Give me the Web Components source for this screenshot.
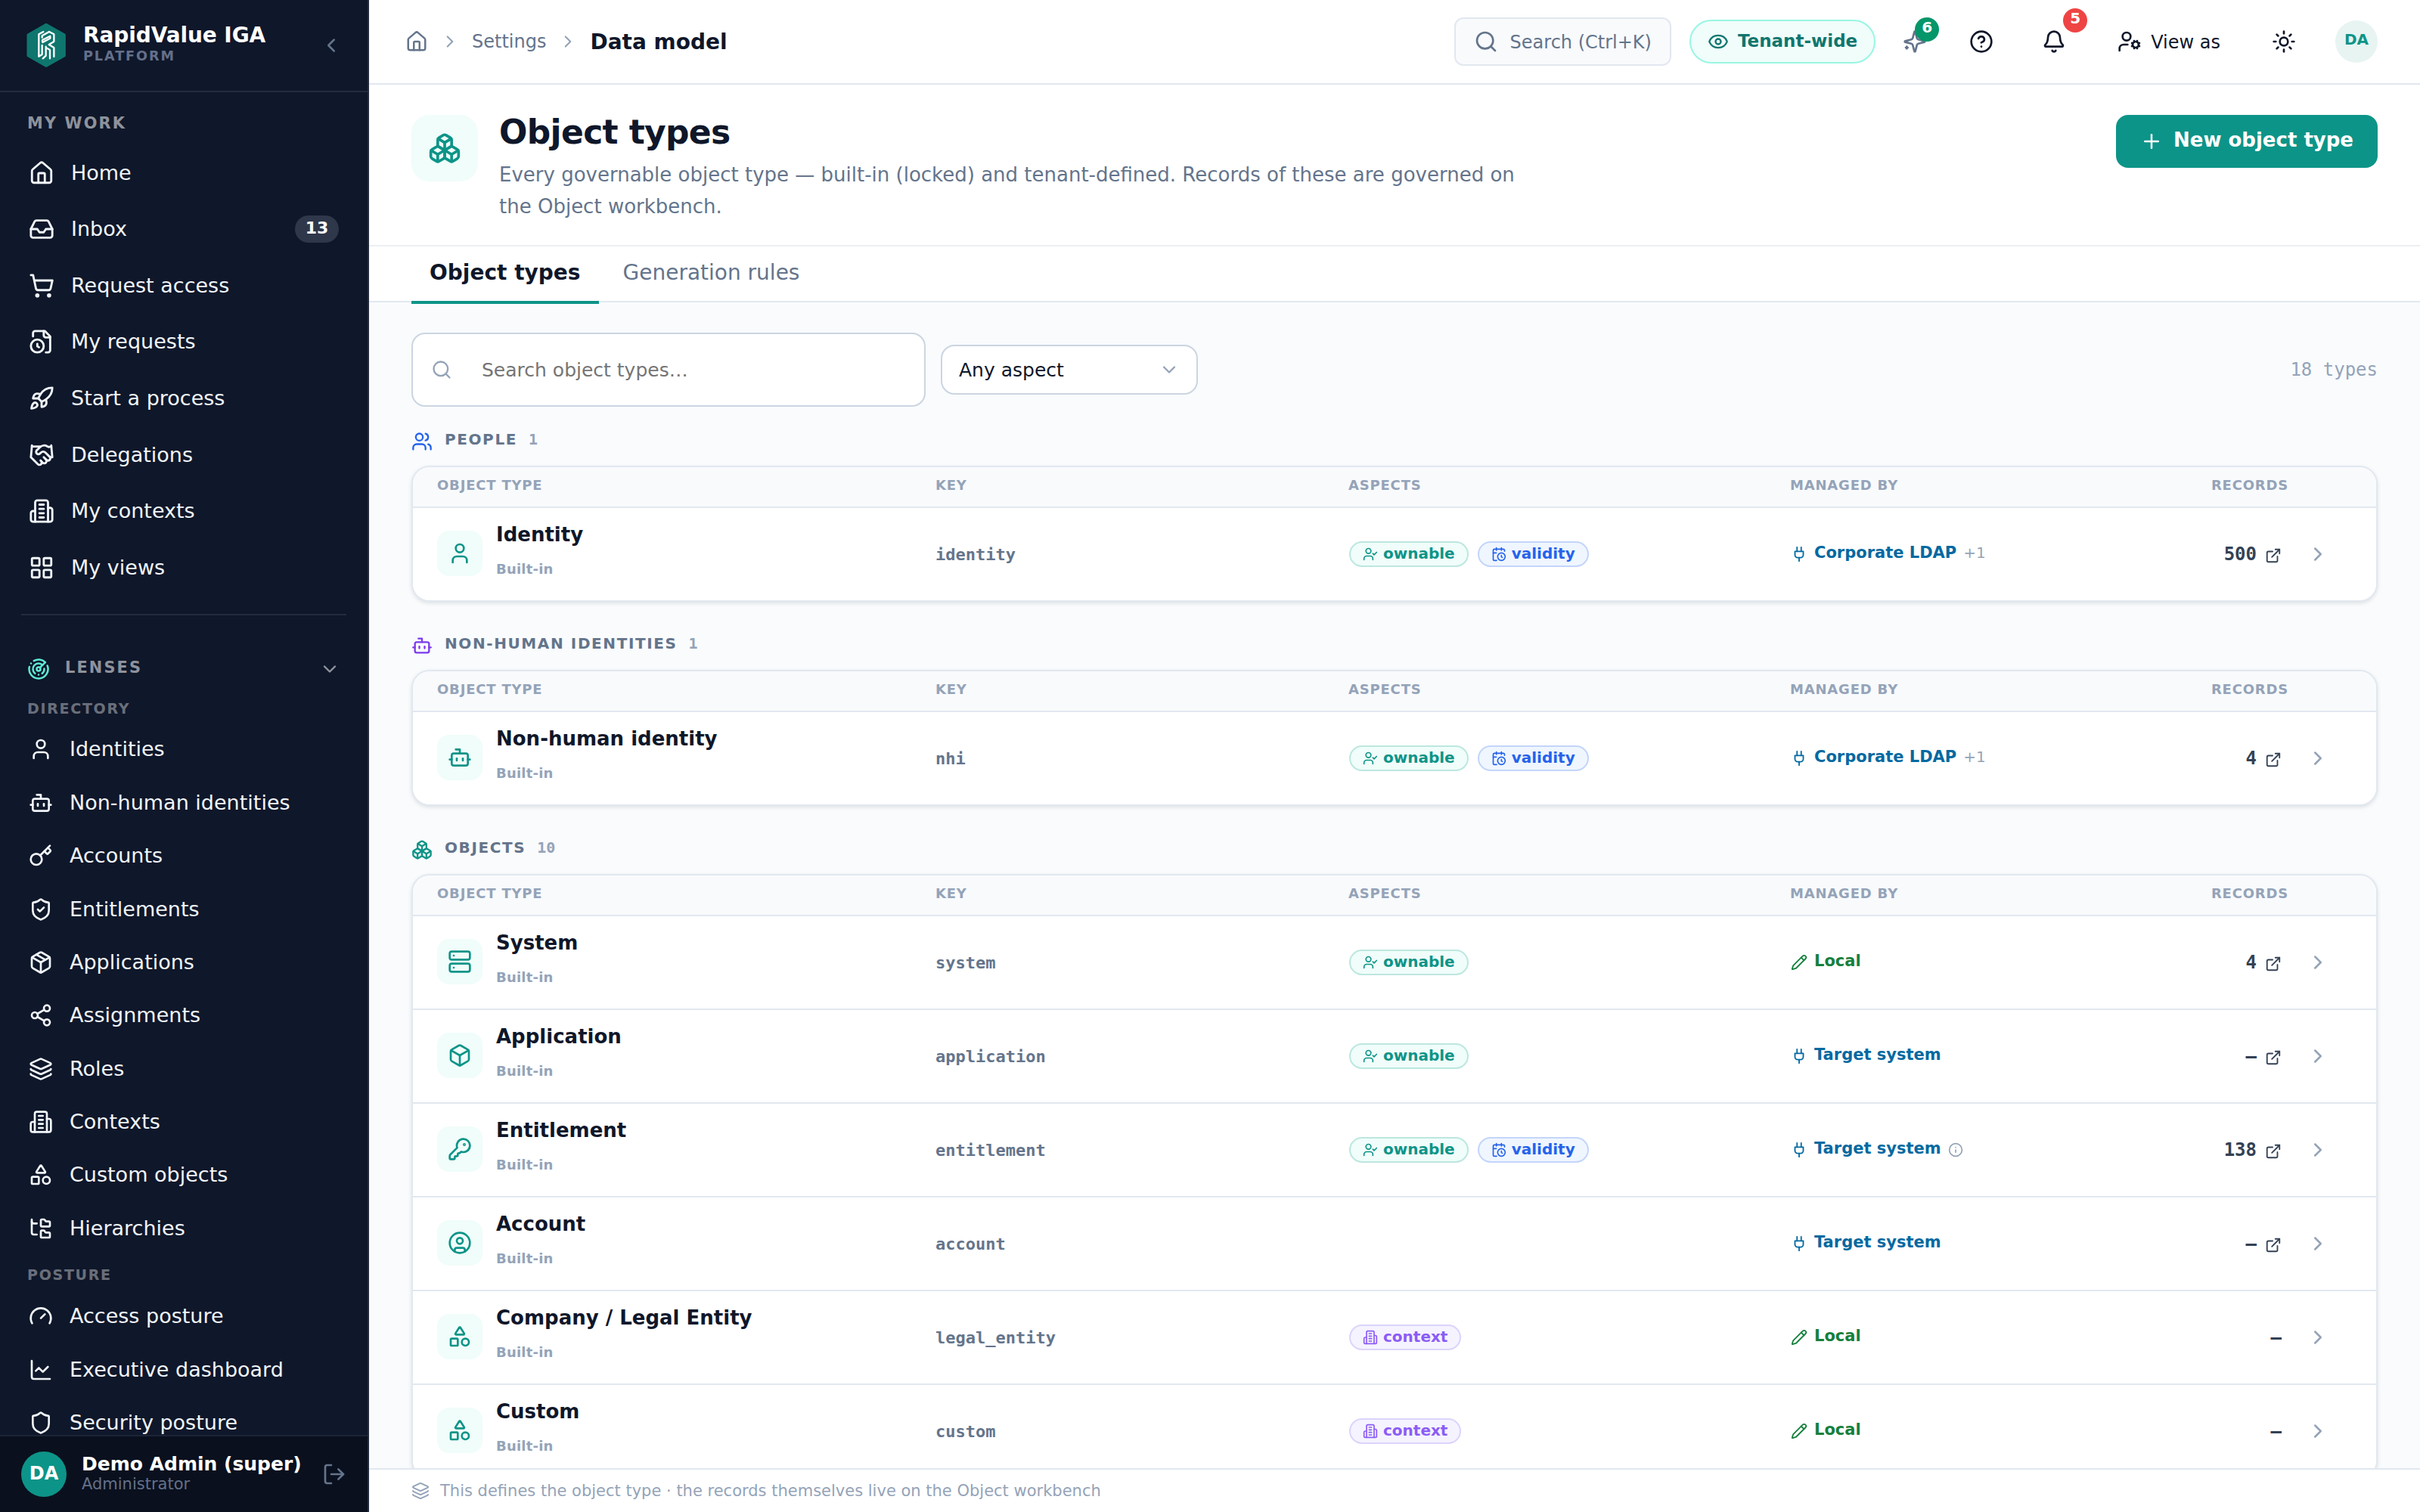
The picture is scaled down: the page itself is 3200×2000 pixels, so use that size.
<!DOCTYPE html>
<html lang="en">
<head>
<meta charset="utf-8">
<title>Data model - RapidValue IGA</title>
<style>
  html, body {
    margin: 0;
    height: 100%;
    overflow: hidden;
  }
  body {
    font-family: "DejaVu Sans", sans-serif;
    color: #0f172a;
  }
</style>
</head>
<body>
<x-app></x-app>
<script>
const ICONS = {
  house: '<path d="M15 21v-8a1 1 0 0 0-1-1h-4a1 1 0 0 0-1 1v8"/><path d="M3 10a2 2 0 0 1 .709-1.528l7-5.999a2 2 0 0 1 2.582 0l7 5.999A2 2 0 0 1 21 10v9a2 2 0 0 1-2 2H5a2 2 0 0 1-2-2z"/>',
  inbox: '<polyline points="22 12 16 12 14 15 10 15 8 12 2 12"/><path d="M5.45 5.11 2 12v6a2 2 0 0 0 2 2h16a2 2 0 0 0 2-2v-6l-3.45-6.89A2 2 0 0 0 16.76 4H7.24a2 2 0 0 0-1.79 1.11z"/>',
  cart: '<circle cx="8" cy="21" r="1"/><circle cx="19" cy="21" r="1"/><path d="M2.05 2.05h2l2.66 12.42a2 2 0 0 0 2 1.58h9.78a2 2 0 0 0 1.95-1.57l1.65-7.43H5.12"/>',
  fileClock: '<path d="M16 22h2a2 2 0 0 0 2-2V7l-5-5H6a2 2 0 0 0-2 2v3"/><path d="M14 2v4a2 2 0 0 0 2 2h4"/><circle cx="8" cy="16" r="6"/><path d="M8 14v2.2l1.6 1"/>',
  rocket: '<path d="M4.5 16.5c-1.5 1.26-2 5-2 5s3.74-.5 5-2c.71-.84.7-2.13-.09-2.91a2.18 2.18 0 0 0-2.91-.09z"/><path d="m12 15-3-3a22 22 0 0 1 2-3.95A12.88 12.88 0 0 1 22 2c0 2.72-.78 7.5-6 11a22.35 22.35 0 0 1-4 2z"/><path d="M9 12H4s.55-3.03 2-4c1.62-1.08 5 0 5 0"/><path d="M12 15v5s3.03-.55 4-2c1.08-1.62 0-5 0-5"/>',
  handshake: '<path d="m11 17 2 2a1 1 0 1 0 3-3"/><path d="m14 14 2.5 2.5a1 1 0 1 0 3-3l-3.88-3.88a3 3 0 0 0-4.24 0l-.88.88a1 1 0 1 1-3-3l2.81-2.81a5.79 5.79 0 0 1 7.06-.87l.47.28a2 2 0 0 0 1.42.25L21 4"/><path d="m21 3 1 11h-2"/><path d="M3 3 2 14l6.5 6.5a1 1 0 1 0 3-3"/><path d="M3 4h8"/>',
  building: '<path d="M6 22V4a2 2 0 0 1 2-2h8a2 2 0 0 1 2 2v18Z"/><path d="M6 12H4a2 2 0 0 0-2 2v6a2 2 0 0 0 2 2h2"/><path d="M18 9h2a2 2 0 0 1 2 2v9a2 2 0 0 1-2 2h-2"/><path d="M10 6h4"/><path d="M10 10h4"/><path d="M10 14h4"/><path d="M10 18h4"/>',
  grid: '<rect width="7" height="7" x="3" y="3" rx="1"/><rect width="7" height="7" x="14" y="3" rx="1"/><rect width="7" height="7" x="14" y="14" rx="1"/><rect width="7" height="7" x="3" y="14" rx="1"/>',
  radar: '<path d="M19.07 4.93A10 10 0 0 0 6.99 3.34"/><path d="M4 6h.01"/><path d="M2.29 9.62A10 10 0 1 0 21.31 8.35"/><path d="M16.24 7.76A6 6 0 1 0 8.23 16.67"/><path d="M12 18h.01"/><path d="M17.99 11.66A6 6 0 0 1 15.77 16.67"/><circle cx="12" cy="12" r="2"/><path d="m13.41 10.59 5.66-5.66"/>',
  user: '<path d="M19 21v-2a4 4 0 0 0-4-4H9a4 4 0 0 0-4 4v2"/><circle cx="12" cy="7" r="4"/>',
  bot: '<path d="M12 8V4H8"/><rect width="16" height="12" x="4" y="8" rx="2"/><path d="M2 14h2"/><path d="M20 14h2"/><path d="M15 13v2"/><path d="M9 13v2"/>',
  key: '<path d="m15.5 7.5 2.3 2.3a1 1 0 0 0 1.4 0l2.1-2.1a1 1 0 0 0 0-1.4L19 4"/><path d="m21 2-9.6 9.6"/><circle cx="7.5" cy="15.5" r="5.5"/>',
  keyRound: '<path d="M2.586 17.414A2 2 0 0 0 2 18.828V21a1 1 0 0 0 1 1h3a1 1 0 0 0 1-1v-1a1 1 0 0 1 1-1h1a1 1 0 0 0 1-1v-1a1 1 0 0 1 1-1h.172a2 2 0 0 0 1.414-.586l.814-.814a6.5 6.5 0 1 0-4-4z"/><circle cx="16.5" cy="7.5" r=".5" fill="currentColor"/>',
  shield: '<path d="M20 13c0 5-3.5 7.5-7.66 8.95a1 1 0 0 1-.67-.01C7.5 20.5 4 18 4 13V6a1 1 0 0 1 1-1c2 0 4.5-1.2 6.24-2.72a1.17 1.17 0 0 1 1.52 0C14.51 3.81 17 5 19 5a1 1 0 0 1 1 1z"/>',
  shieldCheck: '<path d="M20 13c0 5-3.5 7.5-7.66 8.95a1 1 0 0 1-.67-.01C7.5 20.5 4 18 4 13V6a1 1 0 0 1 1-1c2 0 4.5-1.2 6.24-2.72a1.17 1.17 0 0 1 1.52 0C14.51 3.81 17 5 19 5a1 1 0 0 1 1 1z"/><path d="m9 12 2 2 4-4"/>',
  package: '<path d="M11 21.73a2 2 0 0 0 2 0l7-4A2 2 0 0 0 21 16V8a2 2 0 0 0-1-1.73l-7-4a2 2 0 0 0-2 0l-7 4A2 2 0 0 0 3 8v8a2 2 0 0 0 1 1.73z"/><path d="M12 22V12"/><polyline points="3.29 7 12 12 20.71 7"/><path d="m7.5 4.27 9 5.15"/>',
  box: '<path d="M21 8a2 2 0 0 0-1-1.73l-7-4a2 2 0 0 0-2 0l-7 4A2 2 0 0 0 3 8v8a2 2 0 0 0 1 1.73l7 4a2 2 0 0 0 2 0l7-4A2 2 0 0 0 21 16Z"/><path d="m3.3 7 8.7 5 8.7-5"/><path d="M12 22V12"/>',
  share: '<circle cx="18" cy="5" r="3"/><circle cx="6" cy="12" r="3"/><circle cx="18" cy="19" r="3"/><path d="m8.59 13.51 6.83 3.98"/><path d="m15.41 6.51-6.82 3.98"/>',
  layers: '<path d="M12.83 2.18a2 2 0 0 0-1.66 0L2.6 6.08a1 1 0 0 0 0 1.83l8.58 3.91a2 2 0 0 0 1.66 0l8.58-3.9a1 1 0 0 0 0-1.83z"/><path d="M2 12a1 1 0 0 0 .58.91l8.6 3.91a2 2 0 0 0 1.65 0l8.58-3.9A1 1 0 0 0 22 12"/><path d="M2 17a1 1 0 0 0 .58.91l8.6 3.91a2 2 0 0 0 1.65 0l8.58-3.9A1 1 0 0 0 22 17"/>',
  shapes: '<path d="M8.3 10a.7.7 0 0 1-.626-1.079L11.4 3a.7.7 0 0 1 1.198-.043L16.3 8.9a.7.7 0 0 1-.572 1.1Z"/><rect x="3" y="14" width="7" height="7" rx="1"/><circle cx="17.5" cy="17.5" r="3.5"/>',
  folderTree: '<path d="M20 10a1 1 0 0 0 1-1V6a1 1 0 0 0-1-1h-2.5a1 1 0 0 1-.8-.4l-.9-1.2A1 1 0 0 0 15 3h-2a1 1 0 0 0-1 1v5a1 1 0 0 0 1 1Z"/><path d="M20 21a1 1 0 0 0 1-1v-3a1 1 0 0 0-1-1h-2.9a1 1 0 0 1-.88-.55l-.42-.85a1 1 0 0 0-.92-.6H13a1 1 0 0 0-1 1v5a1 1 0 0 0 1 1Z"/><path d="M3 5a2 2 0 0 0 2 2h3"/><path d="M3 3v13a2 2 0 0 0 2 2h3"/>',
  gauge: '<path d="m12 14 4-4"/><path d="M3.34 19a10 10 0 1 1 17.32 0"/>',
  chart: '<path d="M3 3v16a2 2 0 0 0 2 2h16"/><path d="m19 9-5 5-4-4-3 3"/>',
  logout: '<path d="m16 17 5-5-5-5"/><path d="M21 12H9"/><path d="M9 21H5a2 2 0 0 1-2-2V5a2 2 0 0 1 2-2h4"/>',
  left: '<path d="m15 18-6-6 6-6"/>',
  right: '<path d="m9 18 6-6-6-6"/>',
  down: '<path d="m6 9 6 6 6-6"/>',
  search: '<path d="m21 21-4.34-4.34"/><circle cx="11" cy="11" r="8"/>',
  eye: '<path d="M2.062 12.348a1 1 0 0 1 0-.696 10.75 10.75 0 0 1 19.876 0 1 1 0 0 1 0 .696 10.75 10.75 0 0 1-19.876 0"/><circle cx="12" cy="12" r="3"/>',
  sparkles: '<path d="M9.937 15.5A2 2 0 0 0 8.5 14.063l-6.135-1.582a.5.5 0 0 1 0-.962L8.5 9.936A2 2 0 0 0 9.937 8.5l1.582-6.135a.5.5 0 0 1 .963 0L14.063 8.5A2 2 0 0 0 15.5 9.937l6.135 1.581a.5.5 0 0 1 0 .964L15.5 14.063a2 2 0 0 0-1.437 1.437l-1.582 6.135a.5.5 0 0 1-.963 0z"/><path d="M20 3v4"/><path d="M22 5h-4"/><path d="M4 17v2"/><path d="M5 18H3"/>',
  help: '<circle cx="12" cy="12" r="10"/><path d="M9.09 9a3 3 0 0 1 5.83 1c0 2-3 3-3 3"/><path d="M12 17h.01"/>',
  bell: '<path d="M10.268 21a2 2 0 0 0 3.464 0"/><path d="M3.262 15.326A1 1 0 0 0 4 17h16a1 1 0 0 0 .74-1.673C19.41 13.956 18 12.499 18 8A6 6 0 0 0 6 8c0 4.499-1.411 5.956-2.738 7.326"/>',
  userCog: '<path d="M10 15H6a4 4 0 0 0-4 4v2"/><path d="m14.305 16.53.923-.382"/><path d="m15.228 13.852-.923-.383"/><path d="m16.852 12.228-.383-.923"/><path d="m16.852 17.772-.383.924"/><path d="m19.148 12.228.383-.923"/><path d="m19.53 18.696-.382-.924"/><path d="m20.772 13.852.924-.383"/><path d="m20.772 16.148.924.383"/><circle cx="18" cy="15" r="3"/><circle cx="9" cy="7" r="4"/>',
  sun: '<circle cx="12" cy="12" r="4"/><path d="M12 2v2"/><path d="M12 20v2"/><path d="m4.93 4.93 1.41 1.41"/><path d="m17.66 17.66 1.41 1.41"/><path d="M2 12h2"/><path d="M20 12h2"/><path d="m6.34 17.66-1.41 1.41"/><path d="m19.07 4.93-1.41 1.41"/>',
  boxes: '<path d="M2.97 12.92A2 2 0 0 0 2 14.63v3.24a2 2 0 0 0 .97 1.71l3 1.8a2 2 0 0 0 2.06 0L12 19v-5.5l-5-3-4.03 2.42Z"/><path d="m7 16.5-4.74-2.85"/><path d="m7 16.5 5-3"/><path d="M7 16.5v5.17"/><path d="M12 13.5V19l3.97 2.38a2 2 0 0 0 2.06 0l3-1.8a2 2 0 0 0 .97-1.71v-3.24a2 2 0 0 0-.97-1.71L17 10.5l-5 3Z"/><path d="m17 16.5-5-3"/><path d="m17 16.5 4.74-2.85"/><path d="M17 16.5v5.17"/><path d="M7.97 4.42A2 2 0 0 0 7 6.13v4.37l5 3 5-3V6.13a2 2 0 0 0-.97-1.71l-3-1.8a2 2 0 0 0-2.06 0l-3 1.8Z"/><path d="M12 8 7.26 5.15"/><path d="m12 8 4.74-2.85"/><path d="M12 13.5V8"/>',
  plus: '<path d="M5 12h14"/><path d="M12 5v14"/>',
  users: '<path d="M16 21v-2a4 4 0 0 0-4-4H6a4 4 0 0 0-4 4v2"/><path d="M16 3.128a4 4 0 0 1 0 7.744"/><path d="M22 21v-2a4 4 0 0 0-3-3.87"/><circle cx="9" cy="7" r="4"/>',
  userCheck: '<path d="m16 11 2 2 4-4"/><path d="M16 21v-2a4 4 0 0 0-4-4H6a4 4 0 0 0-4 4v2"/><circle cx="9" cy="7" r="4"/>',
  calendarClock: '<path d="M16 14v2.2l1.6 1"/><path d="M16 2v4"/><path d="M21 7.5V6a2 2 0 0 0-2-2H5a2 2 0 0 0-2 2v14a2 2 0 0 0 2 2h3.5"/><path d="M3 10h5"/><path d="M8 2v4"/><circle cx="16" cy="16" r="6"/>',
  plug: '<path d="M12 22v-5"/><path d="M9 8V2"/><path d="M15 8V2"/><path d="M18 8v5a4 4 0 0 1-4 4h-4a4 4 0 0 1-4-4V8Z"/>',
  pencil: '<path d="M21.174 6.812a1 1 0 0 0-3.986-3.987L3.842 16.174a2 2 0 0 0-.5.83l-1.321 4.352a.5.5 0 0 0 .623.622l4.353-1.32a2 2 0 0 0 .83-.497z"/><path d="m15 5 4 4"/>',
  info: '<circle cx="12" cy="12" r="10"/><path d="M12 16v-4"/><path d="M12 8h.01"/>',
  external: '<path d="M15 3h6v6"/><path d="M10 14 21 3"/><path d="M18 13v6a2 2 0 0 1-2 2H5a2 2 0 0 1-2-2V8a2 2 0 0 1 2-2h6"/>',
  server: '<rect width="20" height="8" x="2" y="2" rx="2"/><rect width="20" height="8" x="2" y="14" rx="2"/><path d="M6 6h.01"/><path d="M6 18h.01"/>',
  circleUser: '<circle cx="12" cy="12" r="10"/><circle cx="12" cy="10" r="3"/><path d="M7 20.662V19a2 2 0 0 1 2-2h6a2 2 0 0 1 2 2v1.662"/>',
};

// Parses markup into a shadow root of the given element.
function attach(elm, html) {
  const template = document.createElement('template');
  template.innerHTML = html;
  const root = elm.attachShadow({mode: 'open'});
  root.appendChild(template.content.cloneNode(true));
  return root;
}

class Icon extends HTMLElement {
  connectedCallback() {
    if (this.shadowRoot) return;
    const size = this.getAttribute('size') || 32;
    attach(this, `
      <style>
        :host { display: block; flex: none; width: ${size}px; height: ${size}px; }
        svg { display: block; }
      </style>
      <svg width="${size}" height="${size}" viewBox="0 0 24 24" fill="none" stroke="currentColor"
        stroke-width="${this.getAttribute('stroke') || 2}" stroke-linecap="round" stroke-linejoin="round">${ICONS[this.getAttribute('name')]}</svg>
    `);
  }
}

class NavItem extends HTMLElement {
  connectedCallback() {
    if (this.shadowRoot) return;
    const sub = this.hasAttribute('sub');
    const badge = this.getAttribute('badge');
    attach(this, `
      <style>
        :host {
          display: flex;
          align-items: center;
          gap: 22px;
          height: ${sub ? 70.4 : 74.6}px;
          padding: 0 38px;
          box-sizing: border-box;
          font-size: 27px;
          line-height: 40px;
          color: #f1f5f9;
          white-space: nowrap;
        }
        .label { flex: 1; }
        .badge {
          width: 58px;
          height: 36px;
          line-height: 33px;
          border-radius: 18px;
          background: #2f374a;
          color: #fff;
          font-size: 22px;
          font-weight: bold;
          text-align: center;
        }
      </style>
      <x-icon name="${this.getAttribute('icon')}" size="${sub ? 32 : 34}"></x-icon>
      <span class="label"><slot></slot></span>
      ${badge ? `<span class="badge">${badge}</span>` : ''}
    `);
  }
}

class Sidebar extends HTMLElement {
  constructor() {
    super();
    const work = [
      ['house', 'Home'], ['inbox', 'Inbox', 13], ['cart', 'Request access'], ['fileClock', 'My requests'],
      ['rocket', 'Start a process'], ['handshake', 'Delegations'], ['building', 'My contexts'], ['grid', 'My views'],
    ];
    const directory = [
      ['user', 'Identities'], ['bot', 'Non-human identities'], ['key', 'Accounts'], ['shieldCheck', 'Entitlements'],
      ['package', 'Applications'], ['share', 'Assignments'], ['layers', 'Roles'], ['building', 'Contexts'],
      ['shapes', 'Custom objects'], ['folderTree', 'Hierarchies'],
    ];
    const posture = [['gauge', 'Access posture'], ['chart', 'Executive dashboard'], ['shield', 'Security posture']];
    const sub = ([icon, label]) => `<x-nav-item sub icon="${icon}">${label}</x-nav-item>`;
    attach(this, `
      <style>
        :host {
          display: flex;
          flex-direction: column;
          width: 488px;
          height: 100%;
          box-sizing: border-box;
          border-right: 2px solid #232b3d;
          background: #0f172a;
          color: #fff;
          white-space: nowrap;
        }
        .brand {
          display: flex;
          align-items: center;
          height: 120px;
          padding: 0 33px 0 34px;
          border-bottom: 2px solid #232b3d;
        }
        .brand .names { flex: 1; padding: 0 0 5px 22px; }
        .brand b { display: block; font-size: 28px; line-height: 33px; letter-spacing: -.1px; }
        .brand small { display: block; font-size: 17.6px; line-height: 22px; font-weight: bold; letter-spacing: .11em; color: #64708a; }
        .brand x-icon, .user x-icon { color: #64748b; }
        nav { flex: 1; min-height: 0; overflow: hidden; }
        h2, h3 { display: flex; align-items: center; margin: 0; box-sizing: border-box; padding-left: 36px; }
        h2 { font-size: 20.8px; letter-spacing: .105em; color: rgba(255, 255, 255, .55); }
        h2.work { height: 69.4px; padding-top: 12.6px; }
        h2.lenses { height: 50px; margin-top: 46px; padding-right: 36px; }
        h2.lenses span { flex: 1; padding: 0 0 4px 20px; }
        h2.lenses x-icon:first-child { color: #5eead4; }
        h3 { height: 46px; padding-top: 7px; font-size: 19px; letter-spacing: .09em; color: rgba(255, 255, 255, .4); }
        h3.posture { padding-top: 5px; }
        hr { margin: 24px 28px 0; border: 0; height: 2px; background: #232b3d; }
        .user {
          display: flex;
          align-items: center;
          height: 100px;
          padding: 0 28px;
          border-top: 2px solid #1c2537;
          background: #0a101e;
        }
        .avatar {
          width: 60px;
          height: 60px;
          line-height: 58px;
          border-radius: 50%;
          background: #0d9488;
          font-size: 24px;
          font-weight: bold;
          text-align: center;
        }
        .who { flex: 1; padding: 0 0 4px 20px; }
        .who b { display: block; font-size: 25px; line-height: 29px; }
        .who span { display: block; font-size: 21px; line-height: 24px; color: #64708a; }
      </style>
      <div class="brand">
        <svg width="54" height="62" viewBox="100 88 162 186" fill="none" stroke-linejoin="round" stroke-linecap="round">
          <path d="M181 98 254 139V222L181 263 109 222V139Z" fill="#0f766e" stroke="#0f766e" stroke-width="9"/>
          <path d="M170 127 152 137V225L165 217V181M165 150V143L193 127 212 137V166L192 178 212 190V226M166 166V160L197 144V153L167 169M180 186V222L168 233M180 190 196 199V233" stroke="#fff" stroke-width="7"/>
        </svg>
        <div class="names"><b>RapidValue IGA</b><small>PLATFORM</small></div>
        <x-icon name="left" size="30"></x-icon>
      </div>
      <nav>
        <h2 class="work">MY WORK</h2>
        ${work.map(([icon, label, badge]) => `<x-nav-item icon="${icon}" ${badge ? `badge="${badge}"` : ''}>${label}</x-nav-item>`).join('')}
        <hr>
        <h2 class="lenses"><x-icon name="radar" size="30"></x-icon><span>LENSES</span><x-icon name="down" size="28"></x-icon></h2>
        <h3>DIRECTORY</h3>
        ${directory.map(sub).join('')}
        <h3 class="posture">POSTURE</h3>
        ${posture.map(sub).join('')}
      </nav>
      <div class="user">
        <div class="avatar">DA</div>
        <div class="who"><b>Demo Admin (super)</b><span>Administrator</span></div>
        <x-icon name="logout" size="32"></x-icon>
      </div>
    `);
  }
}

class Topbar extends HTMLElement {
  constructor() {
    super();
    attach(this, `
      <style>
        :host {
          display: flex;
          align-items: center;
          height: 110px;
          padding: 0 56px 0 48px;
          border-bottom: 2px solid #e2e8f0;
          background: #fff;
          font-size: 24px;
          white-space: nowrap;
        }
        .crumbs { display: flex; align-items: center; gap: 16px; flex: 1; color: #64748b; }
        .crumbs x-icon[name=right] { color: #94a3b8; }
        .crumbs b { font-size: 28px; color: #0f172a; }
        .search {
          display: flex;
          align-items: center;
          gap: 16px;
          height: 60px;
          padding: 0 24px;
          border: 2px solid #e2e8f0;
          border-radius: 12px;
          background: #f8fafc;
          color: #64748b;
        }
        .search span, .view span { padding-top: 1px; }
        .tenant {
          display: flex;
          align-items: center;
          gap: 12px;
          height: 54px;
          margin-left: 24px;
          padding: 0 22px;
          border: 2px solid #99f6e4;
          border-radius: 30px;
          background: #f0fdfa;
          color: #0f766e;
          font-size: 23px;
          font-weight: bold;
        }
        .tenant span { padding-bottom: 2px; }
        .tool { position: relative; }
        .count {
          position: absolute;
          width: 32px;
          height: 32px;
          line-height: 27px;
          border-radius: 50%;
          color: #fff;
          font-size: 20px;
          font-weight: bold;
          text-align: center;
        }
        .spark { margin-left: 36px; color: #64748b; }
        .spark .count { left: 16px; top: -16px; background: #059669; }
        .help { margin: 0 64px 0 56px; }
        .bell .count { left: 28px; top: -28px; background: #ef4444; }
        .view { display: flex; align-items: center; gap: 12px; margin: 0 68px; }
        .avatar {
          width: 56px;
          height: 56px;
          line-height: 51px;
          margin-left: 52px;
          border-radius: 50%;
          background: #e7f4f2;
          color: #0d9488;
          font-size: 20px;
          font-weight: bold;
          text-align: center;
        }
      </style>
      <div class="crumbs">
        <x-icon name="house" size="30"></x-icon>
        <x-icon name="right" size="26"></x-icon>
        <span>Settings</span>
        <x-icon name="right" size="26"></x-icon>
        <b>Data model</b>
      </div>
      <div class="search"><x-icon name="search"></x-icon><span>Search (Ctrl+K)</span></div>
      <div class="tenant"><x-icon name="eye" size="28"></x-icon><span>Tenant-wide</span></div>
      <div class="tool spark"><x-icon name="sparkles"></x-icon><span class="count">6</span></div>
      <div class="tool help"><x-icon name="help"></x-icon></div>
      <div class="tool bell"><x-icon name="bell"></x-icon><span class="count">5</span></div>
      <div class="view"><x-icon name="userCog"></x-icon><span>View as</span></div>
      <x-icon name="sun"></x-icon>
      <div class="avatar">DA</div>
    `);
  }
}

class PageHead extends HTMLElement {
  constructor() {
    super();
    attach(this, `
      <style>
        :host { display: block; background: #fff; }
        header {
          display: flex;
          align-items: flex-start;
          height: 172px;
          padding: 40px 56px 0;
          border-bottom: 2px solid #eceff3;
        }
        .tile {
          display: grid;
          place-items: center;
          width: 88px;
          height: 88px;
          border-radius: 24px;
          background: #f0fdfa;
          color: #0d9488;
        }
        .text { flex: 1; padding-left: 28px; }
        h1 { margin: -5px 0 7px; font-size: 44px; line-height: 56px; letter-spacing: -.015em; }
        p { margin: 0; max-width: 1360px; font-size: 26px; line-height: 42px; color: #64748b; }
        .new {
          display: flex;
          align-items: center;
          gap: 14px;
          height: 70px;
          padding: 0 32px;
          border-radius: 16px;
          background: #0d9488;
          color: #fff;
          font-size: 26px;
          font-weight: bold;
          white-space: nowrap;
        }
        .new span { padding-bottom: 4px; }
        .tabs { display: flex; gap: 8px; height: 72px; padding: 0 56px; border-bottom: 2px solid #e2e8f0; }
        .tab { height: 72px; line-height: 70px; padding: 0 24px; font-size: 28px; color: #64748b; }
        .active { border-bottom: 4px solid #0d9488; color: #0f172a; font-weight: bold; }
      </style>
      <header>
        <div class="tile"><x-icon name="boxes" size="44"></x-icon></div>
        <div class="text">
          <h1>Object types</h1>
          <p>Every governable object type — built-in (locked) and tenant-defined. Records of these are governed on the Object workbench.</p>
        </div>
        <div class="new"><x-icon name="plus" size="30"></x-icon><span>New object type</span></div>
      </header>
      <div class="tabs">
        <div class="tab active">Object types</div>
        <div class="tab">Generation rules</div>
      </div>
    `);
  }
}

class Filters extends HTMLElement {
  constructor() {
    super();
    attach(this, `
      <style>
        :host { display: flex; align-items: center; gap: 20px; height: 98px; font-size: 25px; }
        .field {
          display: flex;
          align-items: center;
          box-sizing: border-box;
          border: 2px solid #cbd5e1;
          border-radius: 18px;
          background: #fff;
        }
        .search { gap: 39px; width: 680px; height: 98px; padding: 0 24px; color: #757575; }
        .select { justify-content: space-between; width: 340px; height: 66px; padding: 0 22px; }
        .field x-icon { color: #94a3b8; }
        .total { margin-left: auto; font: 24px "DejaVu Sans Mono", monospace; color: #94a3b8; }
      </style>
      <div class="field search"><x-icon name="search" size="28"></x-icon><span>Search object types…</span></div>
      <div class="field select"><span>Any aspect</span><x-icon name="down" size="28"></x-icon></div>
      <span class="total">18 types</span>
    `);
  }
}

class Aspect extends HTMLElement {
  connectedCallback() {
    if (this.shadowRoot) return;
    const kind = this.getAttribute('kind');
    const [icon, color, background, border] = {
      ownable: ['userCheck', '#0d9488', '#f0fdfa', '#bce7df'],
      validity: ['calendarClock', '#2563eb', '#eff6ff', '#c3d5fa'],
      context: ['building', '#8b5cf6', '#f5f3ff', '#ddd3fb'],
    }[kind];
    attach(this, `
      <style>
        :host {
          display: flex;
          align-items: center;
          gap: 7px;
          height: 30px;
          padding: 0 16px;
          border: 2px solid ${border};
          border-radius: 17px;
          background: ${background};
          color: ${color};
          font-size: 20px;
          line-height: 28px;
          font-weight: bold;
        }
        span { padding-bottom: 2px; }
      </style>
      <x-icon name="${icon}" size="20"></x-icon><span>${kind}</span>
    `);
  }
}

class TypeRow extends HTMLElement {
  set data(item) {
    const local = item.managed === 'Local';
    attach(this, `
      <style>
        :host {
          display: grid;
          grid-template-columns: 659px 547px 584px 400px 258px 1fr;
          align-items: center;
          height: 122px;
          padding: 0 32px;
          background: #fff;
          white-space: nowrap;
        }
        :host(:not(:last-child)) { border-bottom: 2px solid #e2e8f0; }
        .type, .aspects, .managed, .records { display: flex; align-items: center; }
        .tile {
          display: grid;
          place-items: center;
          width: 60px;
          height: 60px;
          margin: 0 18px 2px 0;
          border-radius: 16px;
          background: #f0fdfa;
          color: #0d9488;
        }
        .name { padding-bottom: 13px; }
        .name b { display: block; font-size: 26px; line-height: 39px; }
        .name small { display: block; margin-top: 12px; font-size: 18px; line-height: 27px; font-weight: bold; letter-spacing: .2px; color: #94a3b8; }
        .key { font: bold 22px "DejaVu Sans Mono", monospace; color: #64748b; }
        .aspects { gap: 12px; }
        .managed { gap: 9px; font-size: 21px; font-weight: bold; color: ${local ? '#15803d' : '#0369a1'}; }
        .managed span { padding-bottom: 4px; }
        .managed .more { font-size: 20px; font-weight: normal; color: #94a3b8; }
        .managed .info { color: #94a3b8; }
        .records {
          justify-content: flex-end;
          gap: 11px;
          padding-right: 9px;
          font: bold 24px "DejaVu Sans Mono", monospace;
          color: #334155;
        }
        .records x-icon { margin-top: 4px; }
        .go { padding-left: 24px; color: #94a3b8; }
      </style>
      <div class="type">
        <div class="tile"><x-icon name="${item.icon}"></x-icon></div>
        <div class="name"><b>${item.name}</b><small>Built-in</small></div>
      </div>
      <div class="key">${item.key}</div>
      <div class="aspects">${item.aspects.map(kind => `<x-aspect kind="${kind}"></x-aspect>`).join('')}</div>
      <div class="managed">
        <x-icon name="${local ? 'pencil' : 'plug'}" size="22"></x-icon>
        <span>${item.managed}</span>
        ${item.more ? `<span class="more">${item.more}</span>` : ''}
        ${item.info ? '<x-icon class="info" name="info" size="20"></x-icon>' : ''}
      </div>
      <div class="records"><span>${item.records}</span>${item.link ? '<x-icon name="external" size="22"></x-icon>' : ''}</div>
      <div class="go"><x-icon name="right" size="30"></x-icon></div>
    `);
  }
}

class TypeGroup extends HTMLElement {
  set data(group) {
    const root = attach(this, `
      <style>
        :host { display: block; }
        h2 { display: flex; align-items: center; height: 28px; margin: 0 0 18px; font-size: 20px; letter-spacing: .08em; color: #64748b; }
        h2 x-icon { color: ${group.color}; }
        h2 span { padding: 0 0 6px 16px; }
        h2 .count { padding-left: 15px; font-family: "DejaVu Sans Mono", monospace; letter-spacing: 0; color: #94a3b8; }
        .card {
          border: 2px solid #e2e8f0;
          border-radius: 24px;
          background: #fff;
          box-shadow: 0 2px 6px rgba(15, 23, 42, .08), 0 2px 4px rgba(15, 23, 42, .04);
          overflow: hidden;
        }
        .head {
          display: grid;
          grid-template-columns: 659px 546px 584px 400px 259px 1fr;
          height: 52px;
          line-height: 48px;
          padding: 0 32px;
          border-bottom: 2px solid #e2e8f0;
          background: #f8fafc;
          color: #94a3b8;
          font-size: 18px;
          font-weight: bold;
          letter-spacing: .045em;
        }
        .right { text-align: right; }
      </style>
      <h2><x-icon name="${group.icon}" size="28"></x-icon><span>${group.title}</span><span class="count">${group.count}</span></h2>
      <div class="card">
        <div class="head"><span>OBJECT TYPE</span><span>KEY</span><span>ASPECTS</span><span>MANAGED BY</span><span class="right">RECORDS</span></div>
        <div id="rows"></div>
      </div>
    `);
    group.items.forEach(item => {
      const row = document.createElement('x-type-row');
      row.data = item;
      root.getElementById('rows').appendChild(row);
    });
  }
}

class App extends HTMLElement {
  constructor() {
    super();
    this._groups = [
      {
        title: 'PEOPLE', icon: 'users', color: '#2563eb', count: 1,
        items: [
          { icon: 'user', name: 'Identity', key: 'identity', aspects: ['ownable', 'validity'], managed: 'Corporate LDAP', more: '+1', records: '500', link: true },
        ],
      },
      {
        title: 'NON-HUMAN IDENTITIES', icon: 'bot', color: '#7c3aed', count: 1,
        items: [
          { icon: 'bot', name: 'Non-human identity', key: 'nhi', aspects: ['ownable', 'validity'], managed: 'Corporate LDAP', more: '+1', records: '4', link: true },
        ],
      },
      {
        title: 'OBJECTS', icon: 'boxes', color: '#0d9488', count: 10,
        items: [
          { icon: 'server', name: 'System', key: 'system', aspects: ['ownable'], managed: 'Local', records: '4', link: true },
          { icon: 'box', name: 'Application', key: 'application', aspects: ['ownable'], managed: 'Target system', records: '–', link: true },
          { icon: 'keyRound', name: 'Entitlement', key: 'entitlement', aspects: ['ownable', 'validity'], managed: 'Target system', info: true, records: '138', link: true },
          { icon: 'circleUser', name: 'Account', key: 'account', aspects: [], managed: 'Target system', records: '–', link: true },
          { icon: 'shapes', name: 'Company / Legal Entity', key: 'legal_entity', aspects: ['context'], managed: 'Local', records: '–' },
          { icon: 'shapes', name: 'Custom', key: 'custom', aspects: ['context'], managed: 'Local', records: '–' },
        ],
      },
    ];
    this._shadowRoot = attach(this, `
      <style>
        :host { display: flex; width: 3200px; height: 2000px; overflow: hidden; background: #f9fbfd; }
        main { flex: 1; min-width: 0; display: flex; flex-direction: column; }
        .scroll { flex: 1; min-height: 0; overflow: hidden; padding: 40px 56px 0; }
        #groups { display: flex; flex-direction: column; gap: 44px; margin-top: 32px; }
        footer {
          display: flex;
          align-items: center;
          gap: 14px;
          height: 56px;
          padding: 0 56px;
          border-top: 2px solid #e2e8f0;
          background: #fff;
          color: #94a3b8;
          font-size: 21px;
        }
      </style>
      <x-sidebar></x-sidebar>
      <main>
        <x-topbar></x-topbar>
        <x-page-head></x-page-head>
        <div class="scroll">
          <x-filters></x-filters>
          <div id="groups"></div>
        </div>
        <footer><x-icon name="layers" size="24"></x-icon><span>This defines the object type · the records themselves live on the Object workbench</span></footer>
      </main>
    `);
  }

  connectedCallback() {
    const container = this._shadowRoot.getElementById('groups');
    container.innerHTML = '';
    this._groups.forEach(group => {
      const elm = document.createElement('x-type-group');
      elm.data = group;
      container.appendChild(elm);
    });
  }
}

window.customElements.define('x-icon', Icon);
window.customElements.define('x-nav-item', NavItem);
window.customElements.define('x-sidebar', Sidebar);
window.customElements.define('x-topbar', Topbar);
window.customElements.define('x-page-head', PageHead);
window.customElements.define('x-filters', Filters);
window.customElements.define('x-aspect', Aspect);
window.customElements.define('x-type-row', TypeRow);
window.customElements.define('x-type-group', TypeGroup);
window.customElements.define('x-app', App);
</script>
</body>
</html>
